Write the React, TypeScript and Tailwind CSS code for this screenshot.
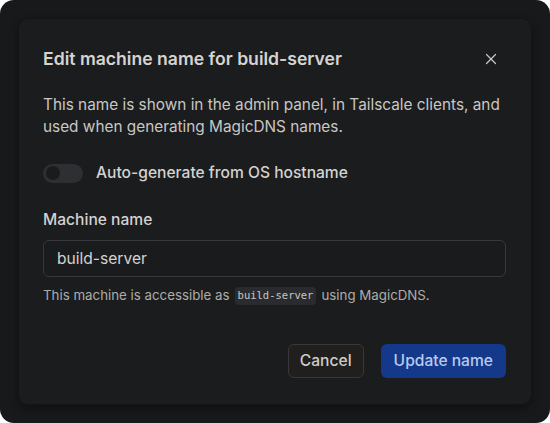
import { X } from 'lucide-react';

export default function App() {
  return (
    <div className="w-[550px] h-[423px] bg-white">
      <div
        className="w-full h-full rounded-[14px] bg-[#18191b] p-[18px] text-[#cfcdca]"
        style={{ fontFamily: 'Inter, "Noto Sans", sans-serif' }}
      >
        <div className="h-full rounded-[10px] bg-[#1b1c1e] border border-[#141517] shadow-[0_4px_10px_rgba(0,0,0,0.35)] pl-[24px] pr-[25px] pt-[24px]">
          <div className="flex items-center justify-between h-[32px]">
            <h2 className="text-[17.6px] font-semibold text-[#d6d4d1]">
              Edit machine name for build-server
            </h2>
            <button className="text-[#c9c7c4] mr-[6px]">
              <X size={18} strokeWidth={1.6} />
            </button>
          </div>
          <p className="mt-[19px] text-[15.35px] leading-[22px] text-[#c9c7c4]">
            This name is shown in the admin panel, in Tailscale clients, and used when generating
            MagicDNS names.
          </p>
          <div className="mt-[23px] h-[24px] flex items-center gap-[13px]">
            <span className="w-[40px] h-[19px] rounded-full bg-[#2d2f33] flex items-center px-[3px]">
              <span className="w-[14px] h-[14px] rounded-full bg-[#1a1b1d]" />
            </span>
            <span className="text-[15.6px] font-medium text-[#d4d2cf]">Auto-generate from OS hostname</span>
          </div>
          <label className="block mt-[23px] text-[15.6px] leading-[24px] font-medium text-[#d4d2cf]">
            Machine name
          </label>
          <div className="mt-[8px] h-[37px] rounded-[6px] border border-[#36383b] bg-[#1a1b1d] flex items-center px-[13px] text-[15.6px] text-[#d4d2cf]">
            build-server
          </div>
          <p className="mt-[9px] h-[20px] text-[13.3px] text-[#aeaca9] flex items-center">
            This machine is accessible as
            <code
              className="mx-[5px] px-[3px] py-[1px] rounded-[4px] bg-[#2a2b2e] text-[10.5px] text-[#c9c7c4]"
              style={{ fontFamily: '"DejaVu Sans Mono", monospace' }}
            >
              build-server
            </code>
            using MagicDNS.
          </p>
          <div className="mt-[38px] flex justify-end gap-[17px]">
            <button className="h-[34px] px-[11px] rounded-[6px] bg-[#211f1d] border border-[#3a3836] text-[15.6px] font-medium text-[#cfcdca]">
              Cancel
            </button>
            <button className="h-[34px] px-[13px] rounded-[6px] bg-[#14398a] text-[15.6px] font-medium text-[#b9c9ee]">
              Update name
            </button>
          </div>
        </div>
      </div>
    </div>
  );
}
